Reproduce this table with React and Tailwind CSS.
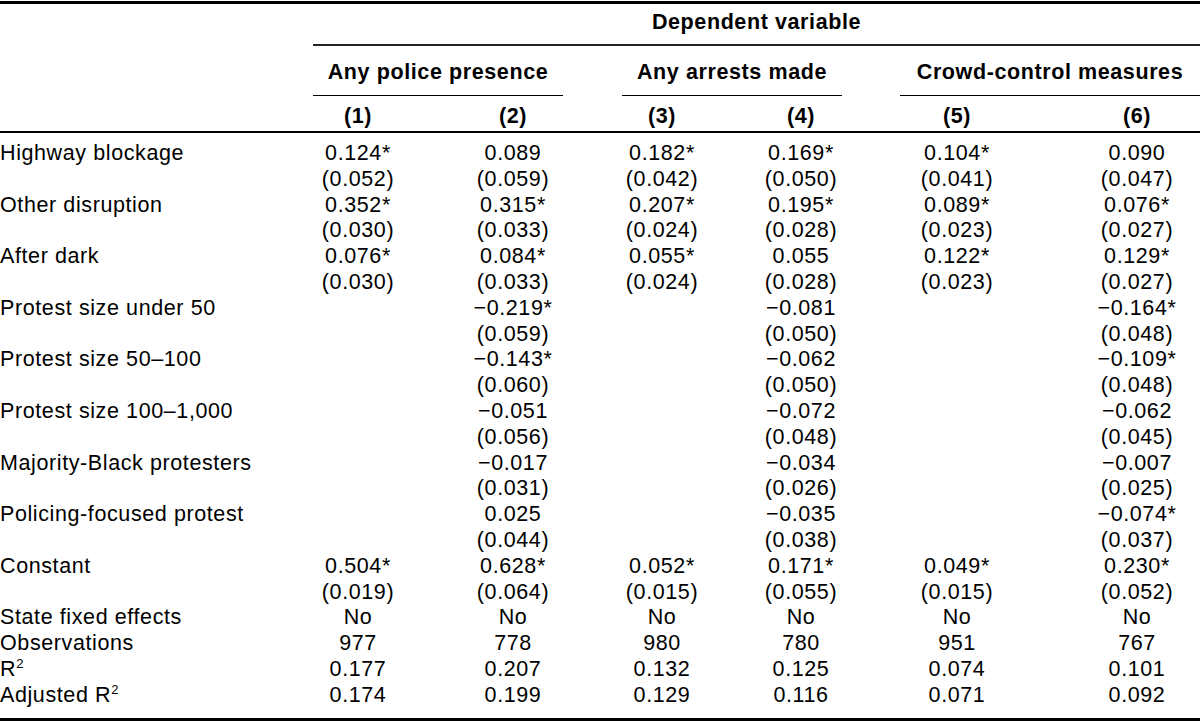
import React from 'react';

// Регрессионная таблица: 6 моделей, сгруппированных по зависимой переменной
const GRID =
  'grid grid-cols-[313px_90px_60px_100px_59px_80px_58px_82px_58px_114px_60px_126px]';

const STARTS = [
  'col-start-2',
  'col-start-4',
  'col-start-6',
  'col-start-8',
  'col-start-10',
  'col-start-12',
];

const M = '\u2212';

const rows = [
  {
    label: 'Highway blockage',
    coef: ['0.124*', '0.089', '0.182*', '0.169*', '0.104*', '0.090'],
    se: ['(0.052)', '(0.059)', '(0.042)', '(0.050)', '(0.041)', '(0.047)'],
  },
  {
    label: 'Other disruption',
    coef: ['0.352*', '0.315*', '0.207*', '0.195*', '0.089*', '0.076*'],
    se: ['(0.030)', '(0.033)', '(0.024)', '(0.028)', '(0.023)', '(0.027)'],
  },
  {
    label: 'After dark',
    coef: ['0.076*', '0.084*', '0.055*', '0.055', '0.122*', '0.129*'],
    se: ['(0.030)', '(0.033)', '(0.024)', '(0.028)', '(0.023)', '(0.027)'],
  },
  {
    label: 'Protest size under 50',
    coef: ['', `${M}0.219*`, '', `${M}0.081`, '', `${M}0.164*`],
    se: ['', '(0.059)', '', '(0.050)', '', '(0.048)'],
  },
  {
    label: 'Protest size 50\u2013100',
    coef: ['', `${M}0.143*`, '', `${M}0.062`, '', `${M}0.109*`],
    se: ['', '(0.060)', '', '(0.050)', '', '(0.048)'],
  },
  {
    label: 'Protest size 100\u20131,000',
    coef: ['', `${M}0.051`, '', `${M}0.072`, '', `${M}0.062`],
    se: ['', '(0.056)', '', '(0.048)', '', '(0.045)'],
  },
  {
    label: 'Majority-Black protesters',
    coef: ['', `${M}0.017`, '', `${M}0.034`, '', `${M}0.007`],
    se: ['', '(0.031)', '', '(0.026)', '', '(0.025)'],
  },
  {
    label: 'Policing-focused protest',
    coef: ['', '0.025', '', `${M}0.035`, '', `${M}0.074*`],
    se: ['', '(0.044)', '', '(0.038)', '', '(0.037)'],
  },
  {
    label: 'Constant',
    coef: ['0.504*', '0.628*', '0.052*', '0.171*', '0.049*', '0.230*'],
    se: ['(0.019)', '(0.064)', '(0.015)', '(0.055)', '(0.015)', '(0.052)'],
  },
];

const stats = [
  { label: 'State fixed effects', vals: ['No', 'No', 'No', 'No', 'No', 'No'] },
  { label: 'Observations', vals: ['977', '778', '980', '780', '951', '767'] },
  { label: 'R', sup: true, vals: ['0.177', '0.207', '0.132', '0.125', '0.074', '0.101'] },
  { label: 'Adjusted R', sup: true, vals: ['0.174', '0.199', '0.129', '0.116', '0.071', '0.092'] },
];

function Line({ label, vals }) {
  return (
    <div className={`${GRID} h-[25.8px] leading-[25.8px]`}>
      <div className="col-start-1 whitespace-nowrap">{label}</div>
      {vals.map((v, i) => (
        <div key={i} className={`${STARTS[i]} text-center whitespace-nowrap`}>
          {v}
        </div>
      ))}
    </div>
  );
}

function Sq() {
  return <sup className="text-[13px] top-[-0.6em] tracking-normal">2</sup>;
}

export default function App() {
  return (
    <div
      className="w-[1200px] h-[723px] bg-white text-black text-[21.5px] tracking-[0.6px]"
      style={{ fontFamily: '"Liberation Sans", Arial, sans-serif' }}
    >
      {/* Верхняя жирная линия */}
      <div className="mt-px border-t-[3px] border-black" />

      {/* Шапка */}
      <div className={`${GRID} font-bold leading-[26px]`}>
        <div className="col-start-2 col-span-11 h-[42px] pt-[5px] text-center border-b-2 border-[#222]">
          Dependent variable
        </div>
      </div>
      <div className={`${GRID} font-bold leading-[26px]`}>
        <div className="col-start-2 col-span-3 h-[50px] pt-[13px] text-center border-b border-black">
          Any police presence
        </div>
        <div className="col-start-6 col-span-3 h-[50px] pt-[13px] text-center border-b border-black">
          Any arrests made
        </div>
        <div className="col-start-10 col-span-3 h-[50px] pt-[13px] text-center border-b border-black">
          Crowd-control measures
        </div>
      </div>
      <div className={`${GRID} font-bold leading-[26px] h-[37px] pt-[7px] border-b-2 border-black`}>
        {['(1)', '(2)', '(3)', '(4)', '(5)', '(6)'].map((t, i) => (
          <div key={t} className={`${STARTS[i]} text-center`}>
            {t}
          </div>
        ))}
      </div>

      {/* Тело таблицы */}
      <div className="pt-[8px] pb-[9px] border-b-[3px] border-black">
        {rows.map((r) => (
          <React.Fragment key={r.label}>
            <Line label={r.label} vals={r.coef} />
            <Line label="" vals={r.se} />
          </React.Fragment>
        ))}
        {stats.map((s) => (
          <Line
            key={s.label}
            label={
              s.sup ? (
                <>
                  {s.label}
                  <Sq />
                </>
              ) : (
                s.label
              )
            }
            vals={s.vals}
          />
        ))}
      </div>
    </div>
  );
}
